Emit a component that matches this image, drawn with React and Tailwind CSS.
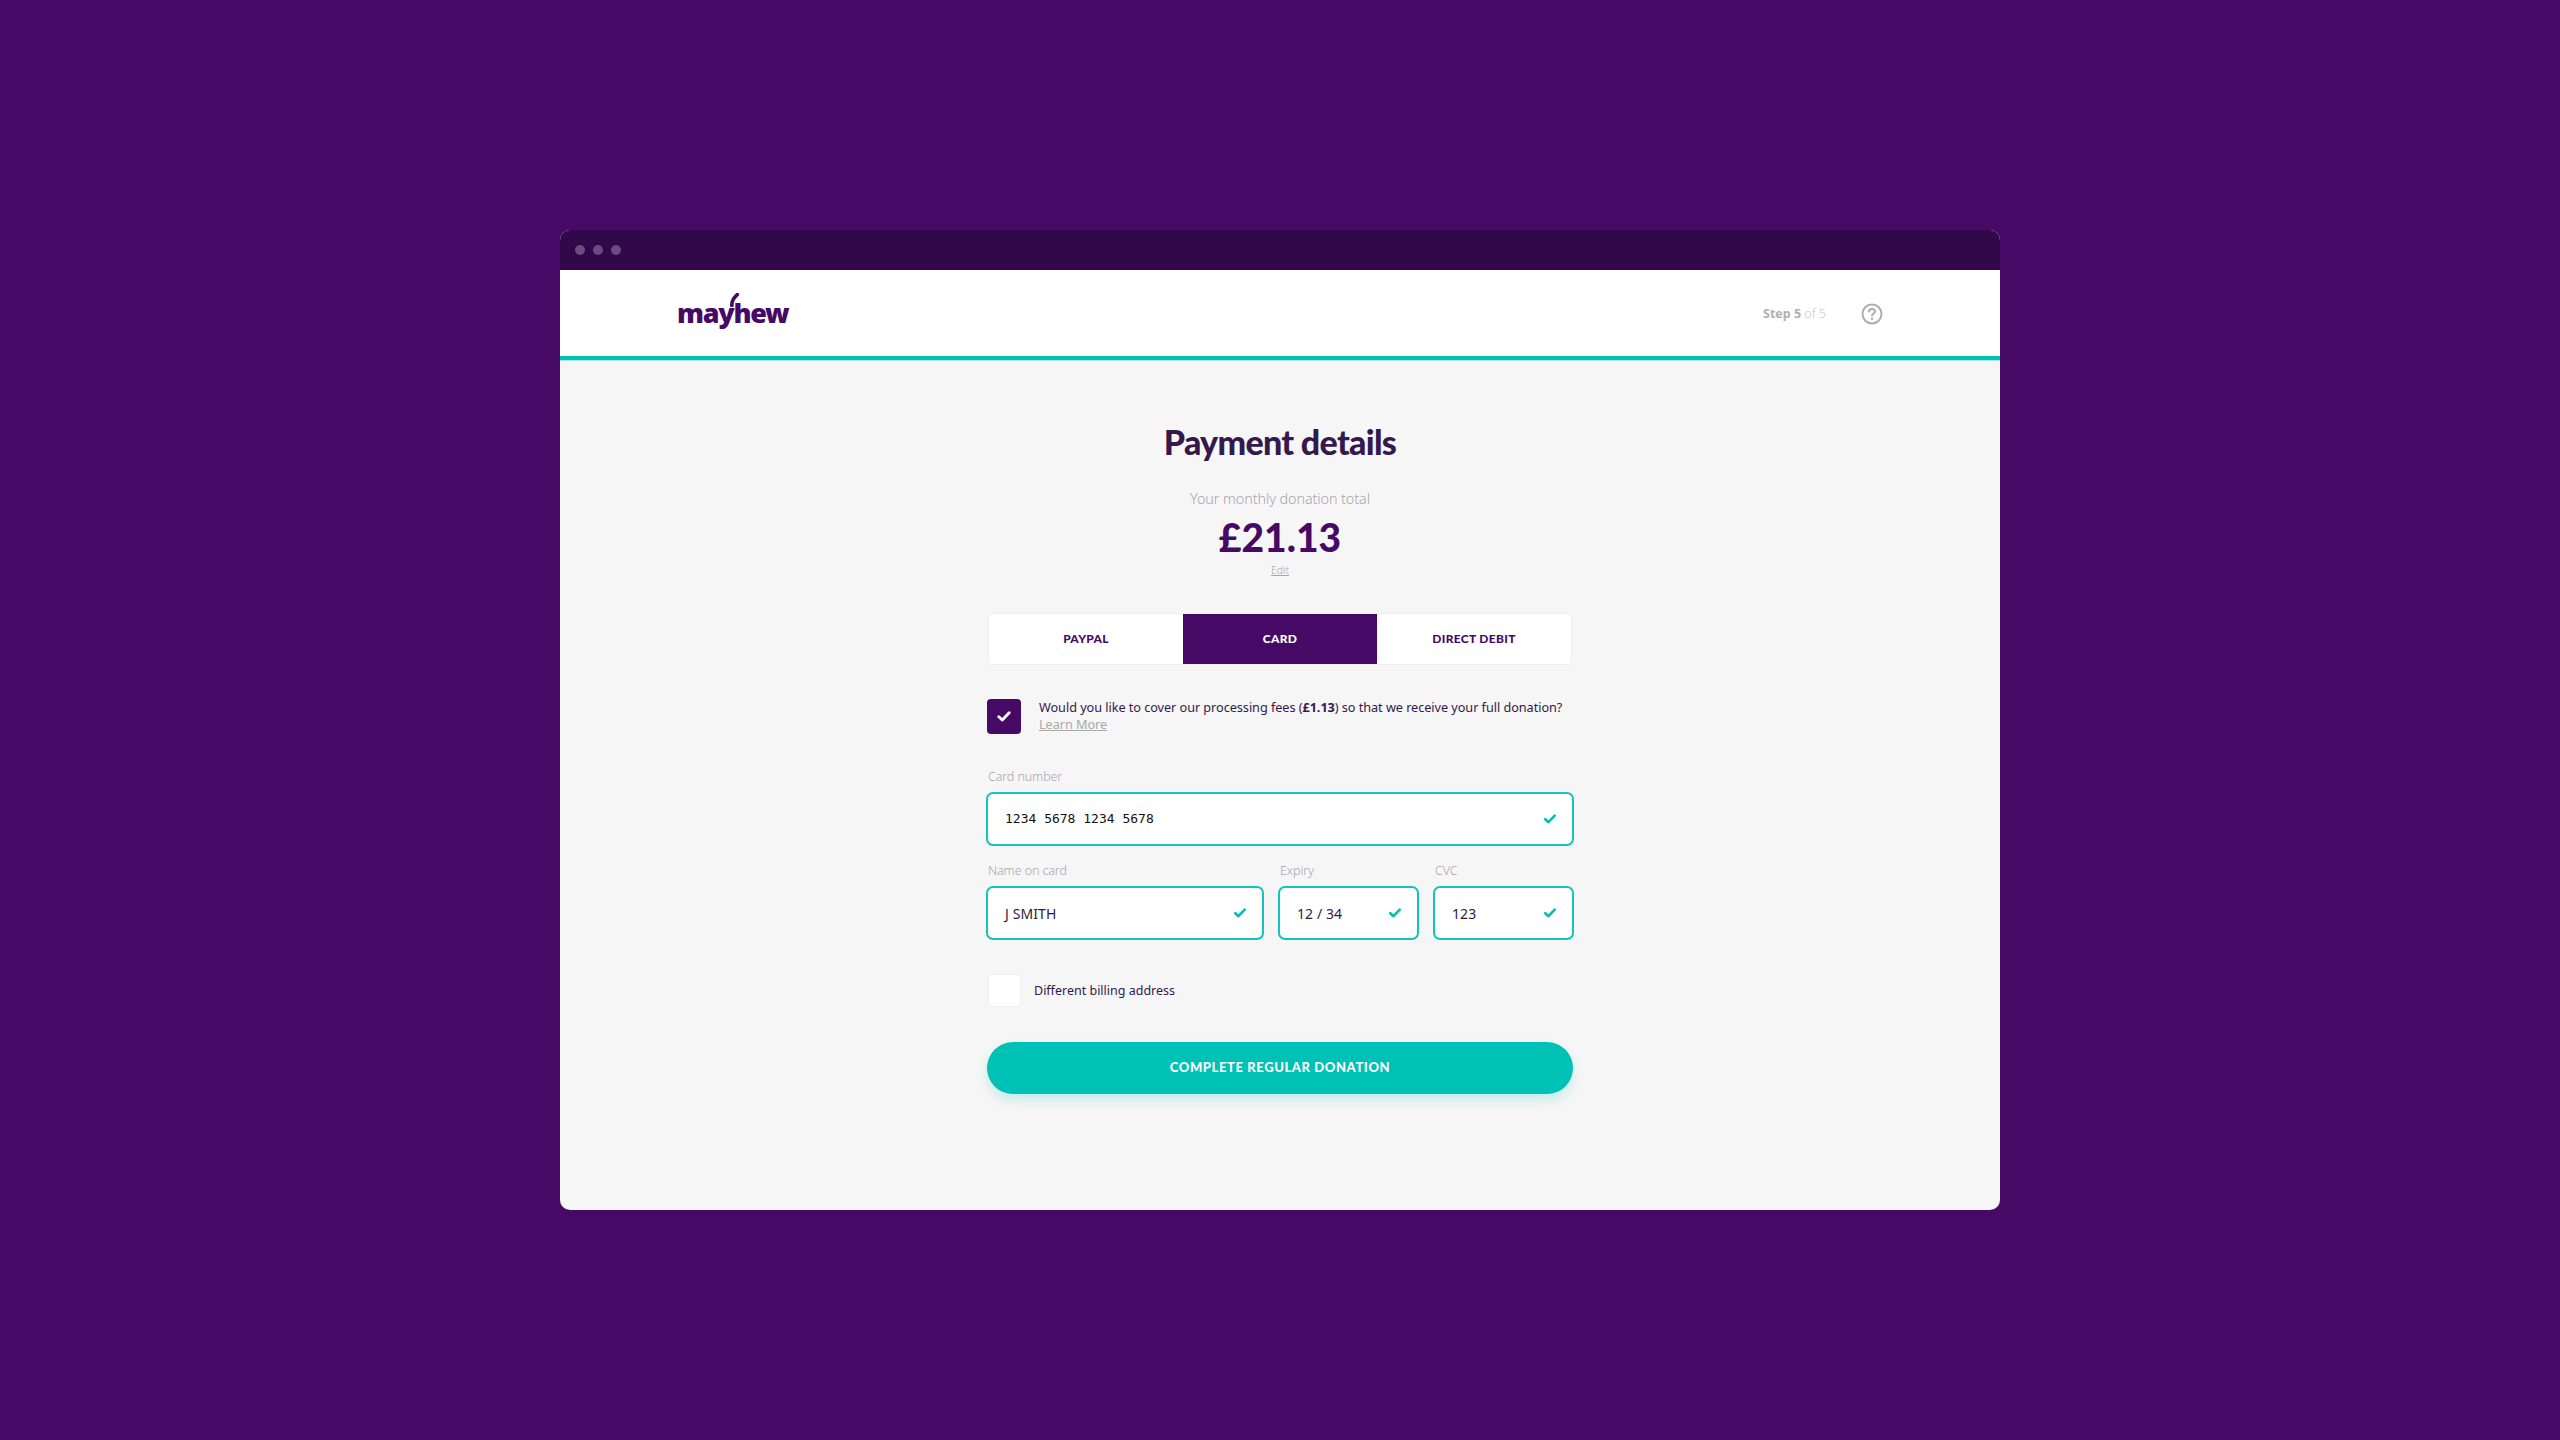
const Check = ({ className = "w-[12px] h-[10px]", color = "#00c1b5" }) => (
  <svg viewBox="0 0 12 10" className={className} fill="none">
    <path d="M1.3 5.2 L4.4 8.2 L10.7 1.6" stroke={color} strokeWidth="2.6" strokeLinecap="round" strokeLinejoin="round" />
  </svg>
);

const Field = ({ label, value, className, valueClass = "font-['Noto_Sans',sans-serif] text-[14px] tracking-[0.1px] text-[#2f1a40]" }) => (
  <div className={className}>
    <div className="h-[18px] pl-[2px] font-['Noto_Sans',sans-serif] text-[12.5px] leading-[18px] font-light tracking-[-0.1px] text-[#a9a4b0]">{label}</div>
    <div className="mt-[6px] flex h-[54px] items-center justify-between rounded-[7px] border-2 border-[#12c4b9] bg-white pl-[17px] pr-[16px]">
      <span className={valueClass}>{value}</span>
      <Check />
    </div>
  </div>
);

export default function App() {
  return (
    <div className="flex min-h-[1440px] items-center justify-center bg-[#460a66] font-['Lato',sans-serif]">
      <div className="flex h-[980px] w-[1440px] flex-col overflow-hidden rounded-[10px] bg-[#f6f6f6]">
        <div className="flex h-[40px] items-center gap-[8px] bg-[#31084a] pl-[15px]">
          <span className="h-[10px] w-[10px] rounded-full bg-[#6c4a80]" />
          <span className="h-[10px] w-[10px] rounded-full bg-[#6c4a80]" />
          <span className="h-[10px] w-[10px] rounded-full bg-[#6c4a80]" />
        </div>
        <header className="flex h-[90px] items-center justify-between border-b-4 border-[#00c1b5] bg-white pl-[117px] pr-[117px] shadow-[0_1px_0_#a5e6e1]">
          <div className="relative">
            <span className="font-['Noto_Sans',sans-serif] text-[27px] font-black leading-[40px] tracking-[-1.3px] text-[#460a66]">mayhew</span>
            <svg viewBox="0 0 12 14" className="absolute left-[53px] top-[0px] h-[14px] w-[11px]" fill="none">
              <path d="M2 13 C2 7 4 5 8 1" stroke="#460a66" strokeWidth="4" strokeLinecap="round" />
            </svg>
          </div>
          <div className="flex translate-y-[1px] items-center gap-[35px]">
            <span className="font-['Noto_Sans',sans-serif] text-[12.5px] text-[#c9c9c9]">
              <b className="font-bold text-[#b0b0b0]">Step 5</b> <span className="font-light">of 5</span>
            </span>
            <svg viewBox="0 0 22 22" className="h-[22px] w-[22px]" fill="none">
              <circle cx="11" cy="11" r="9.5" stroke="#adadad" strokeWidth="2" />
              <path d="M8 8.6 C8 6.8 9.4 6 11 6 C12.8 6 14 7 14 8.5 C14 10.4 11 10.6 11 12.6" stroke="#adadad" strokeWidth="2" strokeLinecap="round" />
              <circle cx="11" cy="15.8" r="1.2" fill="#adadad" />
            </svg>
          </div>
        </header>
        <main className="mx-auto flex w-[588px] flex-col pt-[61px]">
          <h1 className="text-center text-[34px] font-black leading-[42px] tracking-[-0.7px] text-[#34194d]">Payment details</h1>
          <p className="mt-[26px] text-center font-['Noto_Sans',sans-serif] text-[14.4px] font-light leading-[20px] tracking-[-0.1px] text-[#a9a4b0]">Your monthly donation total</p>
          <p className="mt-[6px] text-center text-[39px] font-black leading-[44px] text-[#460a66]">£21.13</p>
          <p className="mt-[4px] text-center font-['Noto_Sans',sans-serif] text-[10.5px] font-light leading-[14px] text-[#a9a4b0] underline">Edit</p>
          <div className="mx-[2px] mt-[36px] grid h-[52px] w-[584px] grid-cols-3 overflow-hidden rounded-[4px] border border-[#efefef] bg-white text-center text-[12px] font-black leading-[50px] tracking-[0.3px] text-[#460a66]">
            <div>PAYPAL</div>
            <div className="bg-[#460a66] text-white">CARD</div>
            <div>DIRECT DEBIT</div>
          </div>
          <div className="mt-[34px] flex pl-[1px]">
            <div className="flex h-[35px] w-[34px] shrink-0 items-center justify-center rounded-[4px] bg-[#460a66]">
              <Check className="h-[11px] w-[14px]" color="#fff" />
            </div>
            <div className="ml-[18px] font-['Noto_Sans',sans-serif] text-[12.7px] leading-[17px] tracking-[-0.05px] text-[#34194d]">
              <div className="whitespace-nowrap">Would you like to cover our processing fees (<b>£1.13</b>) so that we receive your full donation?</div>
              <div className="text-[#a9a9a9] underline">Learn More</div>
            </div>
          </div>
          <Field className="mt-[34px]" label="Card number" value="1234 5678 1234 5678" valueClass="font-['DejaVu_Sans_Mono',monospace] text-[13px] text-[#111]" />
          <div className="mt-[16px] flex gap-[14px]">
            <Field className="w-[278px]" label="Name on card" value="J SMITH" />
            <Field className="w-[141px]" label="Expiry" value="12 / 34" />
            <Field className="w-[141px]" label="CVC" value="123" />
          </div>
          <div className="mt-[34px] flex items-center pl-[2px]">
            <div className="h-[33px] w-[33px] rounded-[4px] border border-[#efefef] bg-white" />
            <span className="ml-[13px] translate-y-[1px] font-['Noto_Sans',sans-serif] text-[12.5px] text-[#34194d]">Different billing address</span>
          </div>
          <button className="mx-[1px] mt-[35px] h-[52px] w-[586px] rounded-full bg-[#00c1b5] text-center text-[13px] font-black tracking-[0.6px] text-white shadow-[0_6px_12px_rgba(0,193,181,0.2)]">COMPLETE REGULAR DONATION</button>
        </main>
      </div>
    </div>
  );
}
